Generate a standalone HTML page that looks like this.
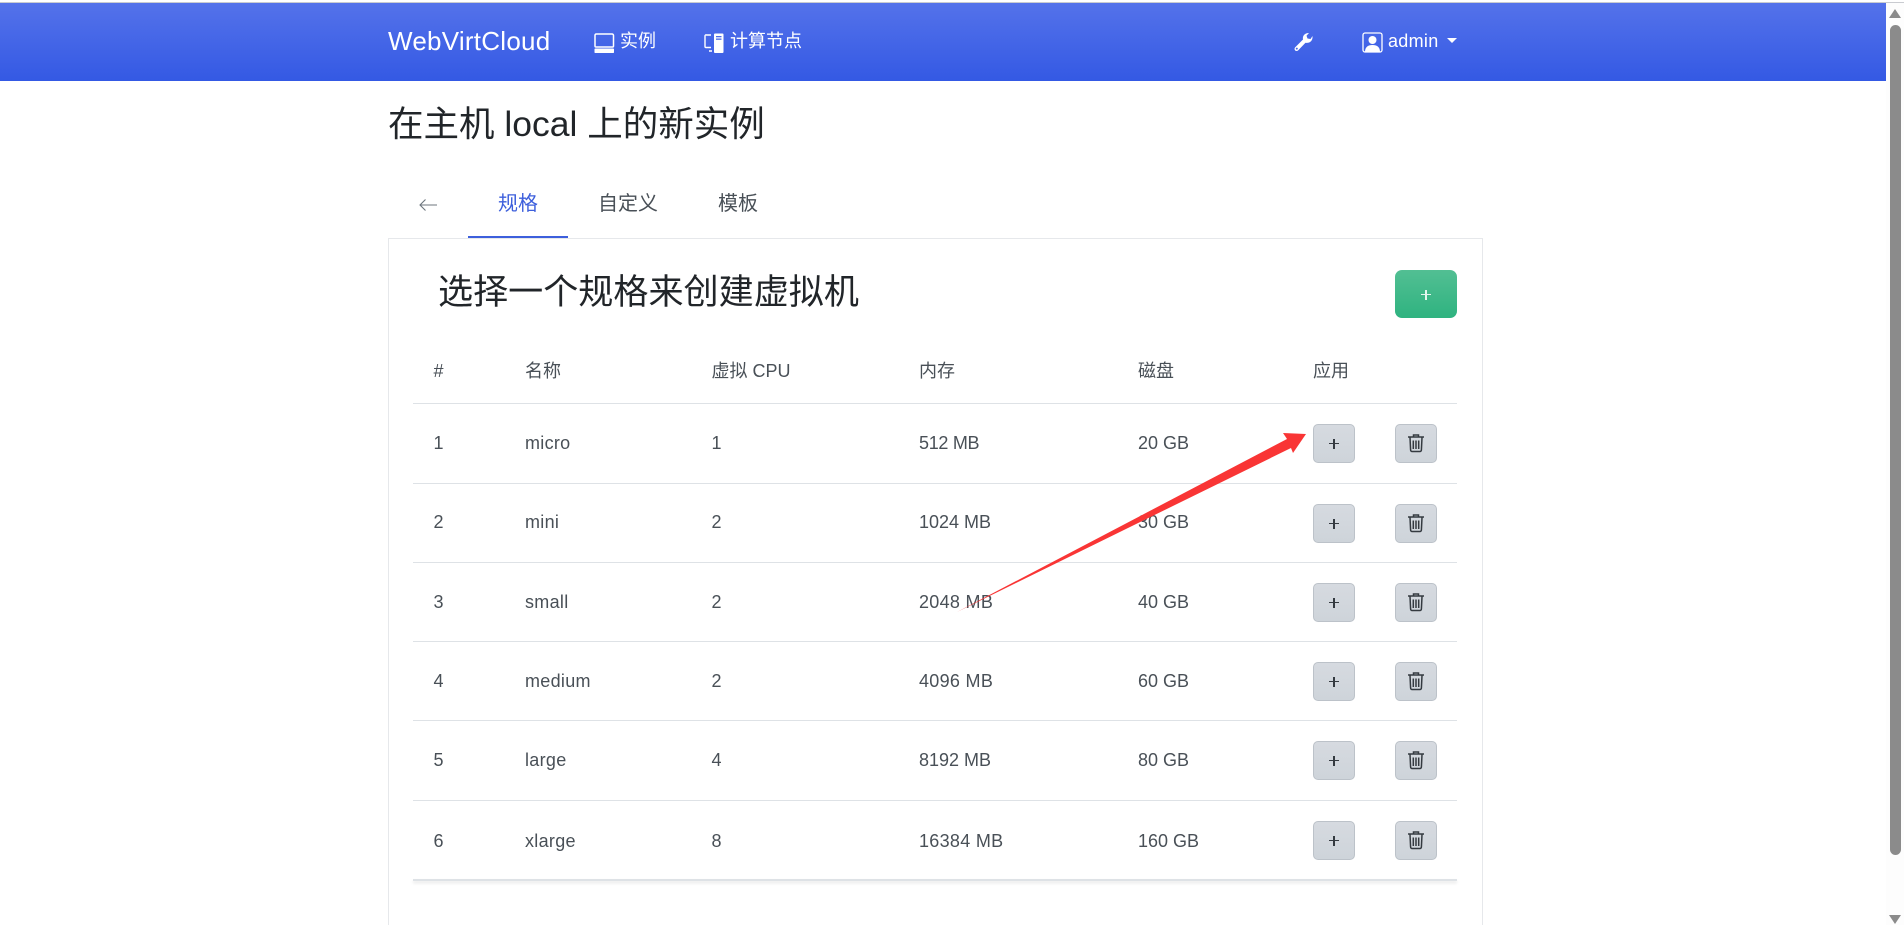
<!DOCTYPE html>
<html lang="zh"><head><meta charset="utf-8"><title>WebVirtCloud</title>
<style>
html,body{margin:0;padding:0;background:#fff;overflow:hidden}
body{width:1904px;height:925px;position:relative;font-family:"Liberation Sans","Noto Sans CJK SC",sans-serif;color:#495057;font-size:18px}
.a{position:absolute;white-space:nowrap;line-height:1}
.d{letter-spacing:.3px}
.nav{position:absolute;left:0;top:3px;width:1886px;height:78px;background:linear-gradient(180deg,#5472ea,#3459e4)}
.w{color:#fff}
.line{position:absolute;left:413px;width:1044px;height:1px;background:#dee2e6}
.btn{position:absolute;width:40px;height:37px;border:1px solid #bcc2c9;border-radius:5px;background:linear-gradient(180deg,#d6dae0,#ced4da);box-sizing:content-box}
.btn.p:after{content:"";position:absolute;left:15px;top:17.8px;width:10px;height:1.4px;background:#343a40}
.btn.p:before{content:"";position:absolute;left:19.3px;top:13.5px;width:1.4px;height:10px;background:#343a40}
svg{position:absolute;overflow:visible}
</style></head><body>
<div style="position:absolute;left:0;top:2px;width:1904px;height:1px;background:#c9cbd0"></div>
<div class="nav"></div>
<div class="a w" style="left:388px;top:28px;font-size:26px;letter-spacing:.25px">WebVirtCloud</div>
<svg style="left:594px;top:33px" width="22" height="22" viewBox="0 0 22 22"><path d="M2 1h16a1.500 1.500 0 0 1 1.500 1.500V13a1 1 0 0 1-1 1H2a1 1 0 0 1-1-1V2.500A1.500 1.500 0 0 1 2 1z" fill="none" stroke="#fff" stroke-width="1.500"/><rect x="0.500" y="15.500" width="19.500" height="4.500" rx=".8" fill="#fff"/></svg>
<div class="a w" style="left:620px;top:32px;font-size:18px">实例</div>
<svg style="left:704px;top:33px" width="24" height="22" viewBox="0 0 24 22"><path d="M7 2H2.500A1 1 0 0 0 1 3v10.500a1 1 0 0 0 1 1h5M5 18h3" fill="none" stroke="#fff" stroke-width="1.400"/><rect x="10" y="0.500" width="9.500" height="19.500" rx="1" fill="#fff"/><rect x="12" y="3" width="5.500" height="1.300" fill="#4a69e8"/><rect x="12" y="5.500" width="5.500" height="1.300" fill="#4a69e8"/></svg>
<div class="a w" style="left:730px;top:32px;font-size:18px">计算节点</div>
<svg style="left:1293px;top:32px" width="20" height="20" viewBox="0 0 20 20"><path d="M2 15.500L10 7.500C9.300 4 11.500 1 16 1L13.500 3.700 14.500 6.500 17.500 7 19.500 4C20 9 16.500 11.500 12.500 10.800L5 18.500C3 20 0.500 17.800 2 15.500z" fill="#fff"/><circle cx="3.800" cy="16.600" r="1" fill="#4a69e8"/></svg>
<svg style="left:1362px;top:32px" width="21" height="21" viewBox="0 0 21 21"><rect x="1" y="1" width="19" height="19" rx="2" fill="none" stroke="#fff" stroke-width="1.300"/><circle cx="10.500" cy="8" r="4" fill="#fff"/><path d="M3 20c0-5 3-7 7.500-7s7.500 2 7.500 7z" fill="#fff"/></svg>
<div class="a w d" style="left:1388px;top:32px;font-size:18px">admin</div>
<div style="position:absolute;left:1447px;top:38px;border-left:5.500px solid transparent;border-right:5.500px solid transparent;border-top:5.500px solid #fff"></div>

<div class="a" style="left:388px;top:106.500px;font-size:35.500px;color:#212529">在主机 local 上的新实例</div>

<svg style="left:418px;top:198px" width="20" height="14" viewBox="0 0 20 14"><path d="M19 7H2M7.500 1.500L2 7l5.500 5.500" fill="none" stroke="#6c757d" stroke-width="1.100"/></svg>
<div class="a" style="left:498px;top:194px;font-size:20px;color:#3d5fdc">规格</div>
<div class="a" style="left:598px;top:194px;font-size:20px">自定义</div>
<div class="a" style="left:718px;top:194px;font-size:20px">模板</div>

<div style="position:absolute;left:388px;top:238px;width:1095px;height:700px;border:1px solid #e6e8eb;box-sizing:border-box"></div>
<div style="position:absolute;left:468px;top:236px;width:100px;height:2px;background:#3d5fdc"></div>

<div class="a" style="left:438px;top:275px;font-size:35.100px;color:#212529">选择一个规格来创建虚拟机</div>
<div style="position:absolute;left:1395px;top:270px;width:62px;height:48px;border-radius:7px;background:linear-gradient(180deg,#52bf93,#2fb380)"></div>
<div style="position:absolute;left:1421px;top:294px;width:10px;height:1.400px;background:#e4f6ee"></div>
<div style="position:absolute;left:1425.300px;top:289.700px;width:1.400px;height:10px;background:#e4f6ee"></div>

<div class="a" style="left:433.500px;top:362px">#</div>
<div class="a" style="left:525px;top:362px">名称</div>
<div class="a" style="left:711.500px;top:362px">虚拟 CPU</div>
<div class="a" style="left:919px;top:362px">内存</div>
<div class="a" style="left:1138px;top:362px">磁盘</div>
<div class="a" style="left:1313px;top:362px">应用</div>

<div class="line" style="top:403px"></div>
<div class="line" style="top:483px"></div>
<div class="line" style="top:562px"></div>
<div class="line" style="top:641px"></div>
<div class="line" style="top:720px"></div>
<div class="line" style="top:800px"></div>
<div class="line" style="top:879px;height:2px;box-shadow:0 2px 3px rgba(0,0,0,.12)"></div>

<div class="a" style="left:433.500px;top:433.500px">1</div><div class="a d" style="left:525px;top:433.500px">micro</div><div class="a" style="left:711.500px;top:433.500px">1</div><div class="a" style="left:919px;top:433.500px;letter-spacing:-.3px">512 MB</div><div class="a" style="left:1138px;top:433.500px">20 GB</div>
<div class="a" style="left:433.500px;top:513px">2</div><div class="a d" style="left:525px;top:513px">mini</div><div class="a" style="left:711.500px;top:513px">2</div><div class="a" style="left:919px;top:513px">1024 MB</div><div class="a" style="left:1138px;top:513px">30 GB</div>
<div class="a" style="left:433.500px;top:593px">3</div><div class="a d" style="left:525px;top:593px">small</div><div class="a" style="left:711.500px;top:593px">2</div><div class="a d" style="left:919px;top:593px">2048 MB</div><div class="a" style="left:1138px;top:593px">40 GB</div>
<div class="a" style="left:433.500px;top:672px">4</div><div class="a d" style="left:525px;top:672px">medium</div><div class="a" style="left:711.500px;top:672px">2</div><div class="a d" style="left:919px;top:672px">4096 MB</div><div class="a" style="left:1138px;top:672px">60 GB</div>
<div class="a" style="left:433.500px;top:751px">5</div><div class="a d" style="left:525px;top:751px">large</div><div class="a" style="left:711.500px;top:751px">4</div><div class="a" style="left:919px;top:751px">8192 MB</div><div class="a" style="left:1138px;top:751px">80 GB</div>
<div class="a" style="left:433.500px;top:832px">6</div><div class="a d" style="left:525px;top:832px">xlarge</div><div class="a" style="left:711.500px;top:832px">8</div><div class="a d" style="left:919px;top:832px">16384 MB</div><div class="a" style="left:1138px;top:832px">160 GB</div>

<div class="btn p" style="left:1313px;top:424px"></div><div class="btn" style="left:1395px;top:424px"><svg style="left:12px;top:9px" width="16" height="18" viewBox="0 0 16 18"><path d="M0 3h16M5.500 3V1h5v2M2 3.500l.6 12.500a1.500 1.500 0 0 0 1.500 1.500h7.800a1.500 1.500 0 0 0 1.500-1.500L14 3.500M5.300 6.500V15M8 6.500V15M10.700 6.500V15" fill="none" stroke="#343a40" stroke-width="1.500"/></svg></div>
<div class="btn p" style="left:1313px;top:504px"></div><div class="btn" style="left:1395px;top:504px"><svg style="left:12px;top:9px" width="16" height="18" viewBox="0 0 16 18"><path d="M0 3h16M5.500 3V1h5v2M2 3.500l.6 12.500a1.500 1.500 0 0 0 1.500 1.500h7.800a1.500 1.500 0 0 0 1.500-1.500L14 3.500M5.300 6.500V15M8 6.500V15M10.700 6.500V15" fill="none" stroke="#343a40" stroke-width="1.500"/></svg></div>
<div class="btn p" style="left:1313px;top:583px"></div><div class="btn" style="left:1395px;top:583px"><svg style="left:12px;top:9px" width="16" height="18" viewBox="0 0 16 18"><path d="M0 3h16M5.500 3V1h5v2M2 3.500l.6 12.500a1.500 1.500 0 0 0 1.500 1.500h7.800a1.500 1.500 0 0 0 1.500-1.500L14 3.500M5.300 6.500V15M8 6.500V15M10.700 6.500V15" fill="none" stroke="#343a40" stroke-width="1.500"/></svg></div>
<div class="btn p" style="left:1313px;top:662px"></div><div class="btn" style="left:1395px;top:662px"><svg style="left:12px;top:9px" width="16" height="18" viewBox="0 0 16 18"><path d="M0 3h16M5.500 3V1h5v2M2 3.500l.6 12.500a1.500 1.500 0 0 0 1.500 1.500h7.800a1.500 1.500 0 0 0 1.500-1.500L14 3.500M5.300 6.500V15M8 6.500V15M10.700 6.500V15" fill="none" stroke="#343a40" stroke-width="1.500"/></svg></div>
<div class="btn p" style="left:1313px;top:741px"></div><div class="btn" style="left:1395px;top:741px"><svg style="left:12px;top:9px" width="16" height="18" viewBox="0 0 16 18"><path d="M0 3h16M5.500 3V1h5v2M2 3.500l.6 12.500a1.500 1.500 0 0 0 1.500 1.500h7.800a1.500 1.500 0 0 0 1.500-1.500L14 3.500M5.300 6.500V15M8 6.500V15M10.700 6.500V15" fill="none" stroke="#343a40" stroke-width="1.500"/></svg></div>
<div class="btn p" style="left:1313px;top:821px"></div><div class="btn" style="left:1395px;top:821px"><svg style="left:12px;top:9px" width="16" height="18" viewBox="0 0 16 18"><path d="M0 3h16M5.500 3V1h5v2M2 3.500l.6 12.500a1.500 1.500 0 0 0 1.500 1.500h7.800a1.500 1.500 0 0 0 1.500-1.500L14 3.500M5.300 6.500V15M8 6.500V15M10.700 6.500V15" fill="none" stroke="#343a40" stroke-width="1.500"/></svg></div>

<svg style="left:0;top:0" width="1904" height="925" viewBox="0 0 1904 925"><polygon points="957,612 1287,439 1283,433 1306,434 1293,453 1291,448" fill="#f93535"/></svg>

<div style="position:absolute;left:1886px;top:3px;width:18px;height:922px;background:#fdfdfd"></div>
<div style="position:absolute;left:1890px;top:25px;width:11px;height:830px;border-radius:6px;background:#8b8b8b"></div>
<div style="position:absolute;left:1889px;top:9px;border-left:6px solid transparent;border-right:6px solid transparent;border-bottom:9px solid #8b8b8b"></div>
<div style="position:absolute;left:1889px;top:915px;border-left:6px solid transparent;border-right:6px solid transparent;border-top:9px solid #8b8b8b"></div>
</body></html>
